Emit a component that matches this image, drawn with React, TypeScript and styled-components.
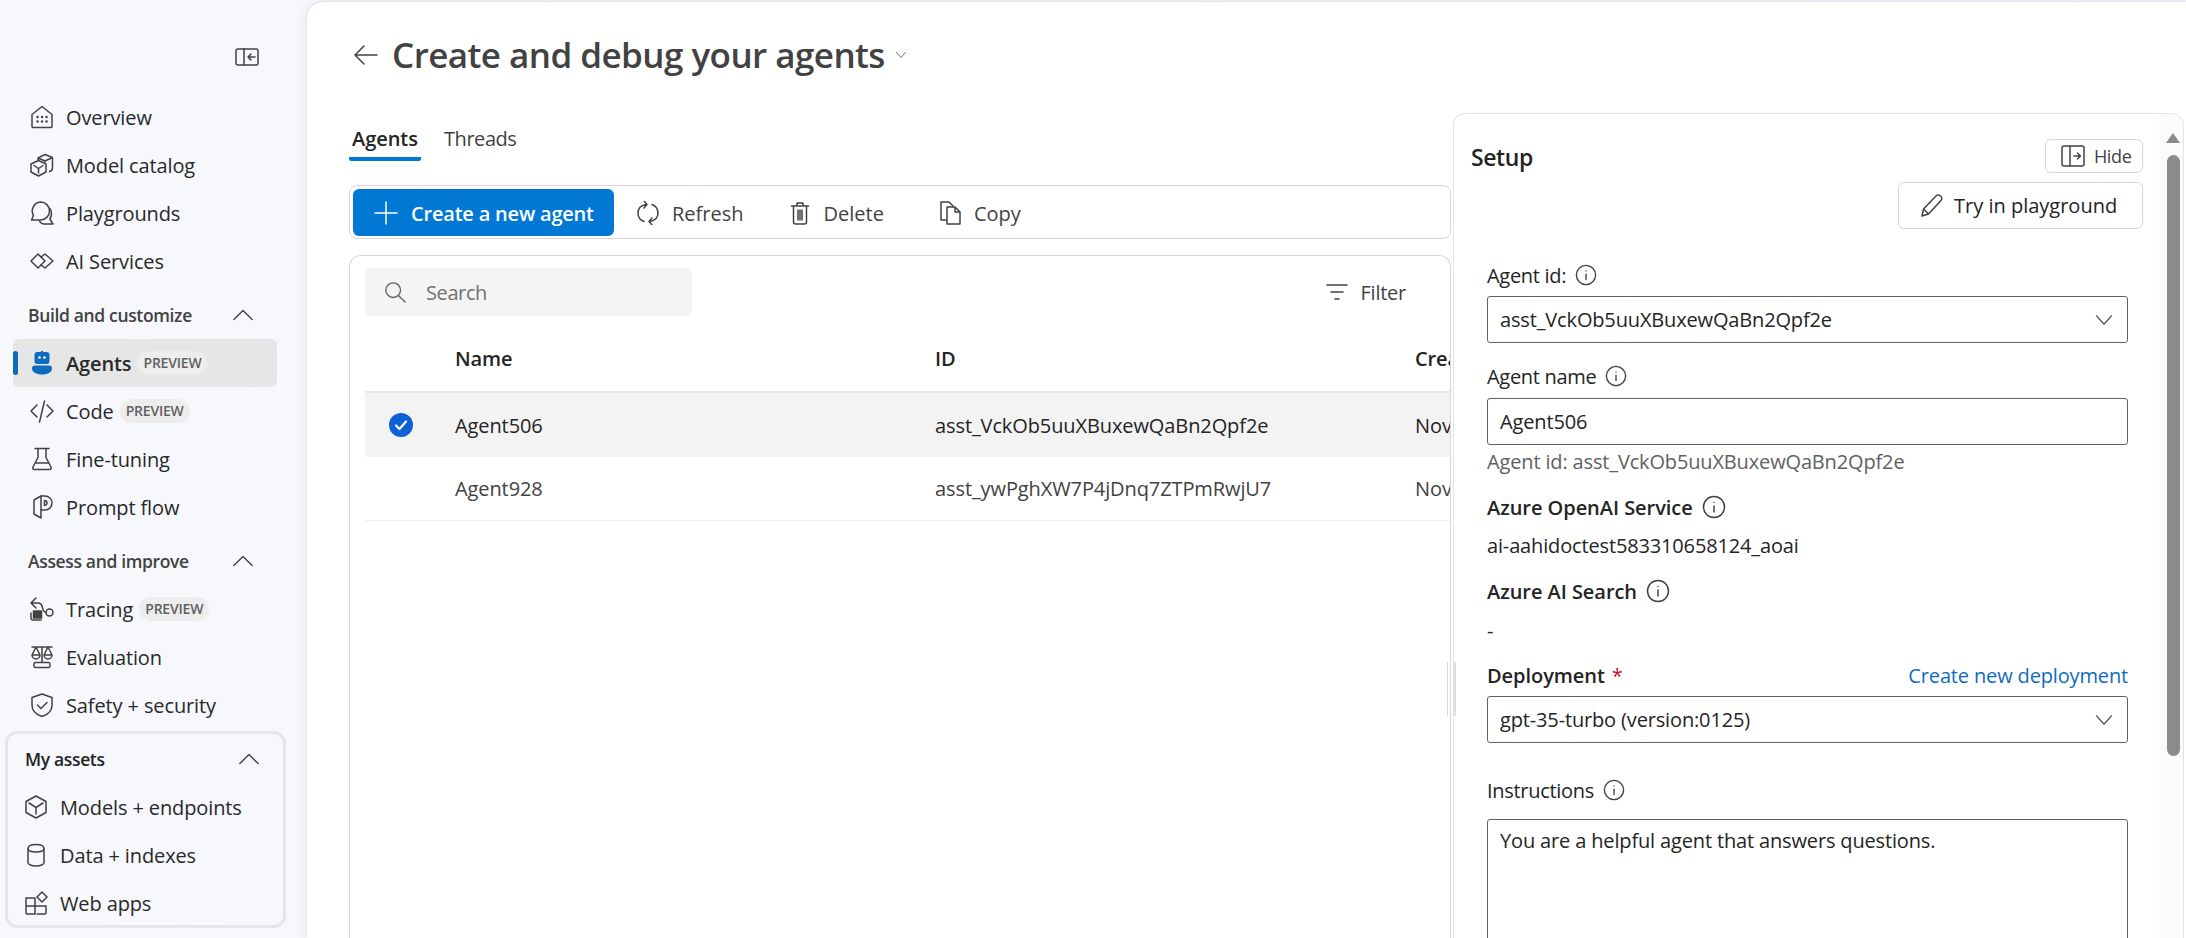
import React from 'react';
import styled, { createGlobalStyle } from 'styled-components';

const GlobalStyle = createGlobalStyle`
   html, body { margin: 0; padding: 0; height: 100%; overflow: hidden; }
   body { font-family: 'Open Sans', 'Liberation Sans', sans-serif; color: #242424; background: #f3f6fb; }
   * { box-sizing: border-box; }
`;

const Page = styled.div`
   display: flex;
   height: 938px;
   overflow: hidden;
   background: linear-gradient(90deg, #f6f8fc, #f1f5fb);
`;

const Sidebar = styled.nav`
   flex: 0 0 307px;
   display: flex;
   flex-direction: column;
`;

const CollapseRow = styled.div`
   height: 93px;
   padding: 45px 0 0 235px;
`;

const NavRow = styled.div<{ $active?: boolean }>`
   position: relative;
   display: flex;
   align-items: center;
   height: 48px;
   width: 264px;
   margin-left: 13px;
   padding-left: 17px;
   gap: 12px;
   font-size: 20px;
   letter-spacing: -0.12px;
   color: #292929;
   border-radius: 6px;
   font-weight: ${p => (p.$active ? 600 : 400)};
   background: ${p => (p.$active ? '#e6e6e6' : 'transparent')};
`;

const ActiveBar = styled.span`
   position: absolute;
   left: 0;
   top: 12px;
   width: 5px;
   height: 24px;
   border-radius: 3px;
   background: #0f6cbd;
`;

const Pill = styled.span`
   font-size: 14px;
   letter-spacing: -0.2px;
   font-weight: 600;
   color: #616161;
   background: #ededed;
   border-radius: 12px;
   padding: 2px 6px;
   line-height: 20px;
   margin-left: -6px;
`;

const SectionHead = styled.div`
   display: flex;
   align-items: center;
   justify-content: space-between;
   height: 54px;
   padding: 6px 53px 0 28px;
   font-size: 17.5px;
   letter-spacing: -0.35px;
   font-weight: 600;
   color: #424242;
`;

const AssetsBox = styled.div`
   margin: 2px 0 0 5px;
   width: 281px;
   height: 197px;
   border: 3px solid #e6e6e6;
   border-radius: 12px;
`;

const AssetsHead = styled.div`
   display: flex;
   align-items: center;
   justify-content: space-between;
   height: 49px;
   padding: 0 23px 0 17px;
   font-size: 17.5px;
   letter-spacing: -0.35px;
   font-weight: 600;
   color: #242424;
`;

const AssetRow = styled.div`
   display: flex;
   align-items: center;
   height: 48px;
   padding-left: 16px;
   gap: 12px;
   font-size: 20px;
   letter-spacing: -0.12px;
   color: #292929;
`;

const Main = styled.main`
   flex: 1;
   min-width: 0;
   display: flex;
   margin-top: 2px;
   background: #fff;
   border-radius: 16px 0 0 0;
   box-shadow: -4px 0 10px rgba(0, 0, 0, 0.05), 0 -1px 2px rgba(0, 0, 0, 0.08);
`;

const LeftColumn = styled.section`
   flex: 0 0 1144px;
   min-width: 0;
   padding-left: 42px;
   overflow: hidden;
`;

const TitleRow = styled.div`
   display: flex;
   align-items: center;
   height: 106px;
   padding-left: 5px;
`;

const Title = styled.h1`
   margin: 0 10px 0 14px;
   font-size: 35px;
   line-height: 44px;
   letter-spacing: -0.55px;
   font-weight: 600;
   color: #424242;
`;

const Tabs = styled.div`
   display: flex;
   height: 53px;
   padding-top: 13px;
`;

const Tab = styled.div<{ $active?: boolean }>`
   height: 40px;
   padding: 0 3px;
   margin-right: 20px;
   width: ${p => (p.$active ? '72px' : 'auto')};
   line-height: 36px;
   font-size: 20px;
   letter-spacing: ${p => (p.$active ? '-0.05px' : '-0.45px')};
   font-weight: ${p => (p.$active ? 600 : 400)};
   color: ${p => (p.$active ? '#242424' : '#424242')};
   border-bottom: ${p => (p.$active ? '4px solid #0078d4' : 'none')};
   border-radius: 0 0 2px 2px;
`;

const Toolbar = styled.div`
   display: flex;
   align-items: center;
   margin-top: 24px;
   height: 54px;
   padding-left: 3px;
   border: 1px solid #d6d6d6;
   border-radius: 8px;
`;

const PrimaryButton = styled.button`
   display: flex;
   align-items: center;
   gap: 13px;
   height: 47px;
   width: 261px;
   padding: 2px 0 0 21px;
   border: 0;
   border-radius: 6px;
   background: #0078d4;
   color: #fff;
   font-family: inherit;
   font-size: 20px;
   letter-spacing: -0.2px;
   font-weight: 600;
`;

const Action = styled.div<{ $offset?: number }>`
   display: flex;
   align-items: center;
   gap: 12px;
   padding: 2px 22px 0;
   margin-left: ${p => p.$offset ?? 0}px;
   font-size: 20px;
   letter-spacing: 0;
   font-weight: 500;
   color: #424242;
`;

const TableCard = styled.div`
   margin-top: 16px;
   height: 700px;
   padding: 12px 0 0 15px;
   border: 1px solid #d6d6d6;
   border-bottom: 0;
   border-radius: 12px 12px 0 0;
`;

const FilterBar = styled.div`
   display: flex;
   align-items: center;
   justify-content: space-between;
   padding-right: 44px;
`;

const SearchBox = styled.div`
   display: flex;
   align-items: center;
   gap: 20px;
   width: 327px;
   height: 48px;
   padding-left: 19px;
   border-radius: 6px;
   background: #f4f4f4;
   font-size: 20px;
   letter-spacing: -0.4px;
   color: #707070;
`;

const FilterButton = styled.div`
   display: flex;
   align-items: center;
   gap: 12px;
   font-size: 20px;
   letter-spacing: -0.25px;
   font-weight: 500;
   color: #424242;
`;

const Row = styled.div<{ $head?: boolean; $selected?: boolean; $muted?: boolean }>`
   display: grid;
   grid-template-columns: 90px 480px 480px 1fr;
   align-items: center;
   height: ${p => (p.$head ? '77px' : '64px')};
   padding-top: ${p => (p.$head ? '10px' : '0')};
   font-size: 20px;
   letter-spacing: -0.1px;
   white-space: nowrap;
   overflow: hidden;
   font-weight: ${p => (p.$head ? 600 : 400)};
   color: ${p => (p.$muted ? '#424242' : '#242424')};
   background: ${p => (p.$selected ? '#f3f3f3' : 'transparent')};
   border-bottom: ${p => (p.$head ? '2px solid #e6e6e6' : p.$muted ? '1px solid #eee' : '0')};
`;

const CheckCell = styled.div`
   display: flex;
   padding-left: 24px;
`;

const PanelSlot = styled.div`
   position: relative;
   flex: 0 0 733px;
   padding-left: 2px;
`;

const SetupPanel = styled.aside`
   position: relative;
   height: 900px;
   margin-top: 111px;
   padding: 25px 0 0 17px;
   border: 1px solid #e3e3e3;
   border-radius: 12px 12px 0 0;
   overflow: hidden;
`;

const ResizeHandle = styled.div`
   position: absolute;
   left: -4px;
   top: 660px;
   width: 9px;
   height: 54px;
   border-left: 1px solid #d6d6d6;
   border-right: 3px solid #e0e0e0;
`;

const SetupHead = styled.div`
   display: flex;
   align-items: flex-start;
   justify-content: space-between;
   height: 34px;
   padding-right: 40px;
`;

const SetupTitle = styled.h2`
   margin: 0;
   font-size: 23px;
   line-height: 36px;
   letter-spacing: -0.4px;
   font-weight: 600;
   color: #242424;
`;

const HideButton = styled.div`
   display: flex;
   align-items: center;
   gap: 9px;
   width: 98px;
   height: 34px;
   padding-left: 15px;
   border: 1px solid #d6d6d6;
   border-radius: 6px;
   font-size: 18px;
   letter-spacing: -0.4px;
   color: #424242;
`;

const TryButton = styled.div`
   display: flex;
   align-items: center;
   gap: 10px;
   width: 245px;
   height: 47px;
   margin: 9px 40px 0 auto;
   padding-left: 21px;
   border: 1px solid #d6d6d6;
   border-radius: 6px;
   font-size: 20px;
   letter-spacing: 0;
   font-weight: 500;
   color: #242424;
`;

const Form = styled.div`
   width: 641px;
   margin-left: 16px;
`;

const Label = styled.div<{ $top: number; $strong?: boolean }>`
   display: flex;
   align-items: center;
   justify-content: space-between;
   height: 28px;
   margin-top: ${p => p.$top}px;
   font-size: 20px;
   letter-spacing: ${p => (p.$strong ? '-0.05px' : '-0.3px')};
   font-weight: ${p => (p.$strong ? 600 : 400)};
   color: #242424;
`;

const LabelGroup = styled.span`
   display: flex;
   align-items: center;
   gap: 9px;
`;

const Required = styled.span`
   color: #c50f1f;
   font-weight: 400;
   margin-left: -2px;
`;

const Helper = styled.div<{ $top: number }>`
   height: 28px;
   line-height: 28px;
   margin-top: ${p => p.$top}px;
   font-size: 20px;
   letter-spacing: -0.15px;
   color: #616161;
`;

const PlainValue = styled(Helper)`
   color: #242424;
`;

const LinkText = styled.a`
   color: #0f6cbd;
   font-weight: 400;
   letter-spacing: -0.15px;
   text-decoration: none;
`;

const Control = styled.div<{ $top: number }>`
   display: flex;
   align-items: center;
   justify-content: space-between;
   height: 47px;
   margin-top: ${p => p.$top}px;
   padding: 0 13px 0 12px;
   border: 1.5px solid #616161;
   border-radius: 3px;
   font-size: 20px;
   letter-spacing: -0.15px;
   color: #242424;
`;

const TextArea = styled.div`
   height: 200px;
   margin-top: 15px;
   padding: 7px 12px;
   border: 1.5px solid #616161;
   border-radius: 3px;
   font-size: 20px;
   line-height: 28px;
   letter-spacing: -0.15px;
   color: #242424;
`;

const ScrollTrack = styled.div`
   position: absolute;
   top: 0;
   right: 0;
   bottom: 0;
   width: 24px;
   background: #fbfbfb;
`;

const ScrollArrow = styled.div`
   position: absolute;
   top: 19px;
   right: 3px;
   width: 0;
   height: 0;
   border-left: 7px solid transparent;
   border-right: 7px solid transparent;
   border-bottom: 10px solid #8b8b8b;
`;

const ScrollThumb = styled.div`
   position: absolute;
   top: 41px;
   right: 3px;
   width: 13px;
   height: 601px;
   border-radius: 7px;
   background: #8b8b8b;
`;

const Svg = styled.svg<{ $size?: number; $color?: string }>`
   flex: none;
   width: ${p => p.$size ?? 24}px;
   height: ${p => p.$size ?? 24}px;
   fill: none;
   stroke: ${p => p.$color ?? '#424242'};
   stroke-width: 1.5;
   stroke-linecap: round;
   stroke-linejoin: round;
`;

type IconProps = { size?: number; color?: string; children: React.ReactNode };

const Icon = ({ size, color, children }: IconProps) => (
   <Svg viewBox='0 0 24 24' $size={size} $color={color}>
      {children}
   </Svg>
);

const Chevron = ({ size = 22, up = false }: { size?: number; up?: boolean }) => (
   <Icon size={size}>
      <path d={up ? 'M2 17 12 7l10 10' : 'M3 7l9 10 9-10'} />
   </Icon>
);

const Info = ({ size = 22 }: { size?: number }) => (
   <Icon size={size}>
      <circle cx='12' cy='12' r='10.5' />
      <path d='M12 11v6' />
      <path d='M12 7.5v.1' />
   </Icon>
);

const sideIcons: Record<string, React.ReactNode> = {
   Overview: (
      <>
         <path d='M2 21.5V9.5L12 1.5l10 8v12a1 1 0 0 1-1 1H3a1 1 0 0 1-1-1z' />
         <path d='M7.5 12h.1M12 12h.1M16.5 12h.1M7.5 16.5h.1M12 16.5h.1M16.5 16.5h.1' strokeWidth='2.4' />
      </>
   ),
   'Model catalog': (
      <>
         <path d='M1 11l7.5-3.5L16 11v8l-7.500 4L1 19z' />
         <path d='M4 12.5l4.5 3 4.500-3M8.500 15.500V20' />
         <path d='M8 6.500V5l7-3.500L22.500 4.500V15c0 2-1 3-3 3.500M8 5l7 3 7.500-3.500M15 8v1' />
      </>
   ),
   Playgrounds: (
      <>
         <path d='M10.500 1a9 9 0 0 1 0 18H1.500l2-4.500A9 9 0 0 1 10.500 1z' />
         <path d='M20 7.500c2 3.500 2 7-.2 10.500l3.200 5h-9c-2 0-3.500-1-4.500-3' />
      </>
   ),
   'AI Services': (
      <>
         <path d='M8 5l-7 7 7 7 7-7z' />
         <path d='M11 8l4-3 8 7-8 7-4-3' />
      </>
   ),
   Code: <path d='M7 6l-6 6 6 6M17 6l6 6-6 6M14.500 2 9.500 23' />,
   'Fine-tuning': <path d='M5 1.500h14M8 1.500v9L3 20c-.7 1.500 0 2.500 1.500 2.500h15c1.500 0 2.200-1 1.500-2.500l-5-9.500v-9M5.500 16h13' />,
   'Prompt flow': (
      <>
         <path d='M4 5l7-4v22l-7-4z' />
         <path d='M11 1h4a7 7 0 0 1 0 14h-4' />
         <path d='M14.500 5.500a2.500 2.500 0 0 1 0 5h-.1z' />
      </>
   ),
   Tracing: (
      <>
         <path d='M6 1 1 6l5 5M1 6h7c3 0 4 2 4.500 4.500.5 3 1.500 5 4 5' />
         <circle cx='19.500' cy='15.500' r='3.500' />
         <rect x='3.500' y='14' width='8' height='7' fill='#424242' />
         <path d='M1 16v5a2 2 0 0 0 2 2h8' />
      </>
   ),
   Evaluation: (
      <>
         <path d='M2 2h20M12 2v15M6 2l-4 8a4 4 0 0 0 8 0zM18 2l-4 8a4 4 0 0 0 8 0zM2 10h8M14 10h8' />
         <rect x='4' y='17.500' width='16' height='5' rx='1.500' />
      </>
   ),
   'Safety + security': (
      <>
         <path d='M12 1l10 3.500V12c0 6-4 9.500-10 11.500C6 21.500 2 18 2 12V4.500z' />
         <path d='M7.500 12l3.500 3.500 6-6' />
      </>
   ),
   'Models + endpoints': (
      <>
         <path d='M12 1l10 5.500v11L12 23 2 17.500v-11z' />
         <path d='M5 8l7 4.500L19 8M12 12.500V19' />
      </>
   ),
   'Data + indexes': (
      <>
         <path d='M4 5.500c0-2.500 3.500-4 8-4s8 1.500 8 4v14c0 2-3.500 3.500-8 3.500s-8-1.500-8-3.500z' />
         <path d='M4 5.500c0 2.500 3.500 3.500 8 3.500s8-1 8-3.500' />
      </>
   ),
   'Web apps': (
      <>
         <path d='M2 7h9v16H3a1 1 0 0 1-1-1zM2 15h20M11 15v8M13 15h9v7a1 1 0 0 1-1 1h-8' />
         <path d='M18 1l5 5-5 5-5-5z' />
      </>
   ),
};

const AgentGlyph = () => (
   <Svg viewBox='0 0 24 24' $size={24} $color='none'>
      <rect x='4.500' y='1' width='15' height='12' rx='3' fill='#0f6cbd' />
      <path d='M11 0h2v2h-2z' fill='#0f6cbd' />
      <circle cx='9.500' cy='6.500' r='1.300' fill='#fff' />
      <circle cx='14.500' cy='6.500' r='1.300' fill='#fff' />
      <path d='M5 14.500h14c2 0 3 1 3 3 0 3.500-4 6-10 6S2 21 2 17.500c0-2 1-3 3-3z' fill='#0f6cbd' />
   </Svg>
);

const SideItem = ({ label, preview }: { label: string; preview?: boolean }) => (
   <NavRow>
      <Icon>{sideIcons[label]}</Icon>
      {label}
      {preview && <Pill>PREVIEW</Pill>}
   </NavRow>
);

const agents = [
   { name: 'Agent506', id: 'asst_VckOb5uuXBuxewQaBn2Qpf2e', selected: true },
   { name: 'Agent928', id: 'asst_ywPghXW7P4jDnq7ZTPmRwjU7', selected: false },
];

const App = () => (
   <Page>
      <GlobalStyle />
      <Sidebar>
         <CollapseRow>
            <Svg viewBox='0 0 24 18' $size={24}>
               <rect x='1' y='1' width='22' height='16' rx='2' />
               <path d='M9 1v16M20 9h-7M16 6l-3 3 3 3' />
            </Svg>
         </CollapseRow>
         <SideItem label='Overview' />
         <SideItem label='Model catalog' />
         <SideItem label='Playgrounds' />
         <SideItem label='AI Services' />
         <SectionHead>
            Build and customize
            <Chevron up />
         </SectionHead>
         <NavRow $active>
            <ActiveBar />
            <AgentGlyph />
            Agents
            <Pill>PREVIEW</Pill>
         </NavRow>
         <SideItem label='Code' preview />
         <SideItem label='Fine-tuning' />
         <SideItem label='Prompt flow' />
         <SectionHead>
            Assess and improve
            <Chevron up />
         </SectionHead>
         <SideItem label='Tracing' preview />
         <SideItem label='Evaluation' />
         <SideItem label='Safety + security' />
         <AssetsBox>
            <AssetsHead>
               My assets
               <Chevron up />
            </AssetsHead>
            {['Models + endpoints', 'Data + indexes', 'Web apps'].map(label => (
               <AssetRow key={label}>
                  <Icon>{sideIcons[label]}</Icon>
                  {label}
               </AssetRow>
            ))}
         </AssetsBox>
      </Sidebar>
      <Main>
         <LeftColumn>
            <TitleRow>
               <Icon>
                  <path d='M23 12H1M10 3l-9 9 9 9' />
               </Icon>
               <Title>Create and debug your agents</Title>
               <Chevron size={12} />
            </TitleRow>
            <Tabs>
               <Tab $active>Agents</Tab>
               <Tab>Threads</Tab>
            </Tabs>
            <Toolbar>
               <PrimaryButton>
                  <Icon color='#fff'>
                     <path d='M12 1v22M1 12h22' />
                  </Icon>
                  Create a new agent
               </PrimaryButton>
               <Action>
                  <Icon>
                     <path d='M10 3.500C4.500 4.500 2 8 2 12c0 4 2 7 6 8.500M8 0l3 3.500L8 7M14 20.500c5.500-1 8-4.500 8-8.500 0-4-2-7-6-8.500M16 24l-3-3.500L16 17' />
                  </Icon>
                  Refresh
               </Action>
               <Action>
                  <Icon>
                     <path d='M3.500 5h17M9 5V2h6v3M5.500 5v16a2 2 0 0 0 2 2h9a2 2 0 0 0 2-2V5M10 9v10M12 9v10M14 9v10' />
                  </Icon>
                  Delete
               </Action>
               <Action $offset={10}>
                  <Icon>
                     <path d='M9 19H3V1h8l4 4M9 6v17h13V11l-5-5zM17 6v5h5' />
                  </Icon>
                  Copy
               </Action>
            </Toolbar>
            <TableCard>
               <FilterBar>
                  <SearchBox>
                     <Icon size={22} color='#616161'>
                        <circle cx='10' cy='10' r='8' />
                        <path d='M16 16l7 7' />
                     </Icon>
                     Search
                  </SearchBox>
                  <FilterButton>
                     <Icon size={24}>
                        <path d='M2 5h20M6 12h12M10 19h4' />
                     </Icon>
                     Filter
                  </FilterButton>
               </FilterBar>
               <Row $head>
                  <span />
                  <span>Name</span>
                  <span>ID</span>
                  <span>Created</span>
               </Row>
               {agents.map(agent => (
                  <Row key={agent.id} $selected={agent.selected} $muted={!agent.selected}>
                     <CheckCell>
                        {agent.selected && (
                           <Svg viewBox='0 0 24 24' $size={24} $color='#fff'>
                              <circle cx='12' cy='12' r='12' fill='#0f5fd7' stroke='none' />
                              <path d='M7 12.500l3.500 3.500 6.500-7.500' strokeWidth='2.200' />
                           </Svg>
                        )}
                     </CheckCell>
                     <span>{agent.name}</span>
                     <span>{agent.id}</span>
                     <span>Nov 20, 2024</span>
                  </Row>
               ))}
            </TableCard>
         </LeftColumn>
         <PanelSlot>
            <SetupPanel>
               <SetupHead>
                  <SetupTitle>Setup</SetupTitle>
                  <HideButton>
                     <Svg viewBox='0 0 24 22' $size={24}>
                        <rect x='1' y='1' width='22' height='20' rx='2' />
                        <path d='M9 1v20M13 11h6M16.500 8l3 3-3 3' />
                     </Svg>
                     Hide
                  </HideButton>
               </SetupHead>
               <TryButton>
                  <Icon>
                     <path d='M2 22l1.500-7L16 2c1.500-1.200 3-1.200 4.500 0s1.500 3.500.5 4.500L8.500 20z M3.500 15l5 5' />
                  </Icon>
                  Try in playground
               </TryButton>
               <Form>
                  <Label $top={32}>
                     <LabelGroup>
                        Agent id: <Info />
                     </LabelGroup>
                  </Label>
                  <Control $top={7}>
                     asst_VckOb5uuXBuxewQaBn2Qpf2e
                     <Chevron size={20} />
                  </Control>
                  <Label $top={19}>
                     <LabelGroup>
                        Agent name <Info />
                     </LabelGroup>
                  </Label>
                  <Control $top={8}>Agent506</Control>
                  <Helper $top={3}>Agent id: asst_VckOb5uuXBuxewQaBn2Qpf2e</Helper>
                  <Label $top={17} $strong>
                     <LabelGroup>
                        Azure OpenAI Service <Info size={24} />
                     </LabelGroup>
                  </Label>
                  <PlainValue $top={11}>ai-aahidoctest583310658124_aoai</PlainValue>
                  <Label $top={17} $strong>
                     <LabelGroup>
                        Azure AI Search <Info size={24} />
                     </LabelGroup>
                  </Label>
                  <PlainValue $top={12}>-</PlainValue>
                  <Label $top={16} $strong>
                     <LabelGroup>
                        Deployment <Required>*</Required>
                     </LabelGroup>
                     <LinkText>Create new deployment</LinkText>
                  </Label>
                  <Control $top={7}>
                     gpt-35-turbo (version:0125)
                     <Chevron size={20} />
                  </Control>
                  <Label $top={33}>
                     <LabelGroup>
                        Instructions <Info />
                     </LabelGroup>
                  </Label>
                  <TextArea>You are a helpful agent that answers questions.</TextArea>
               </Form>
               <ScrollTrack>
                  <ScrollArrow />
                  <ScrollThumb />
               </ScrollTrack>
            </SetupPanel>
            <ResizeHandle />
         </PanelSlot>
      </Main>
   </Page>
);

export default App;
